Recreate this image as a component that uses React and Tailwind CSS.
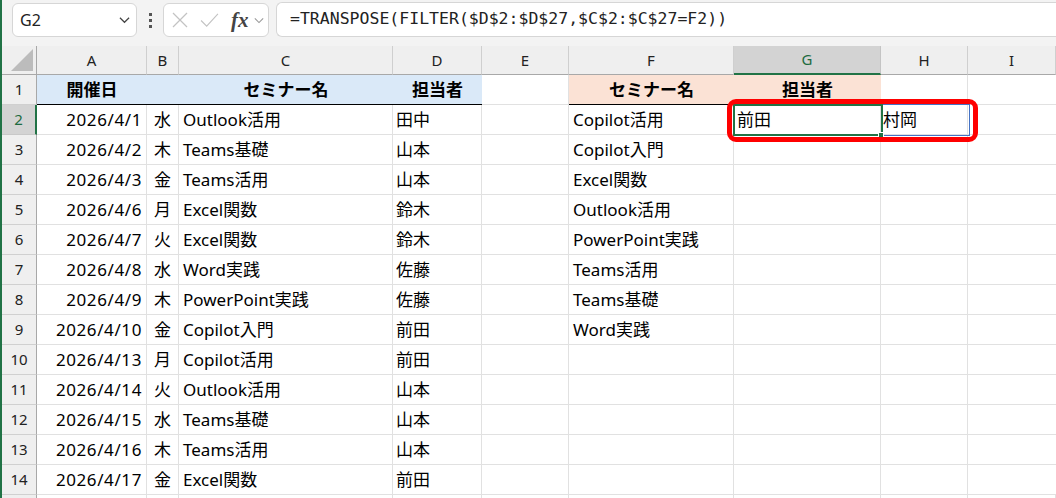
import React from 'react';

// column widths after the 35px row-number gutter
const COLS = [
  { key: 'A', w: 110 },
  { key: 'B', w: 32 },
  { key: 'C', w: 214 },
  { key: 'D', w: 89 },
  { key: 'E', w: 87 },
  { key: 'F', w: 165 },
  { key: 'G', w: 147 },
  { key: 'H', w: 87 },
  { key: 'I', w: 88 },
];

const SEMINARS = [
  ['2026/4/1', '水', 'Outlook活用', '田中'],
  ['2026/4/2', '木', 'Teams基礎', '山本'],
  ['2026/4/3', '金', 'Teams活用', '山本'],
  ['2026/4/6', '月', 'Excel関数', '鈴木'],
  ['2026/4/7', '火', 'Excel関数', '鈴木'],
  ['2026/4/8', '水', 'Word実践', '佐藤'],
  ['2026/4/9', '木', 'PowerPoint実践', '佐藤'],
  ['2026/4/10', '金', 'Copilot入門', '前田'],
  ['2026/4/13', '月', 'Copilot活用', '前田'],
  ['2026/4/14', '火', 'Outlook活用', '山本'],
  ['2026/4/15', '水', 'Teams基礎', '山本'],
  ['2026/4/16', '木', 'Teams活用', '山本'],
  ['2026/4/17', '金', 'Excel関数', '前田'],
];

const UNIQUE_NAMES = [
  'Copilot活用',
  'Copilot入門',
  'Excel関数',
  'Outlook活用',
  'PowerPoint実践',
  'Teams活用',
  'Teams基礎',
  'Word実践',
];

const SPILL = { G: '前田', H: '村岡' };

function Chevron({ className }) {
  return (
    <svg viewBox="0 0 12 8" className={className} fill="none" stroke="currentColor" strokeWidth="1.3">
      <polyline points="1,1.5 6,6.5 11,1.5" />
    </svg>
  );
}

function Toolbar() {
  return (
    <div className="h-[46px] bg-[#f3f3f3] flex items-start pt-[3px]">
      {/* name box */}
      <div className="ml-[10px] w-[125px] h-[34px] bg-white border border-[#d6d6d6] rounded-[6px] flex items-center justify-between pl-[7px] pr-[6px]">
        <span className="text-[16px] text-[#222] font-['Noto_Sans',sans-serif]">G2</span>
        <Chevron className="w-[11px] h-[8px] text-[#444]" />
      </div>

      {/* grip */}
      <div className="w-[26px] h-[34px] flex flex-col items-center justify-center gap-[3px]">
        <span className="w-[3px] h-[3px] bg-[#555]" />
        <span className="w-[3px] h-[3px] bg-[#555]" />
        <span className="w-[3px] h-[3px] bg-[#555]" />
      </div>

      {/* cancel / enter / insert function */}
      <div className="w-[106px] h-[34px] bg-white border border-[#d6d6d6] rounded-[6px] flex items-center pl-[8px]">
        <svg viewBox="0 0 16 16" className="w-[16px] h-[16px]" stroke="#c3c3c3" strokeWidth="1.2">
          <line x1="1" y1="1" x2="15" y2="15" />
          <line x1="15" y1="1" x2="1" y2="15" />
        </svg>
        <svg viewBox="0 0 20 16" className="ml-[12px] w-[19px] h-[15px]" fill="none" stroke="#c3c3c3" strokeWidth="1.2">
          <polyline points="1,8 7,14 19,1" />
        </svg>
        <span className="ml-[12px] text-[21px] leading-none italic font-bold text-[#444] font-['Liberation_Serif',serif]">fx</span>
        <Chevron className="ml-[5px] w-[10px] h-[7px] text-[#999]" />
      </div>

      {/* formula bar */}
      <div className="ml-[7px] flex-1 h-[35px] -mt-[1px] bg-white border border-r-0 border-[#d6d6d6] rounded-l-[6px] flex items-center pl-[13px]">
        <span className="text-[16.5px] text-[#222] font-['DejaVu_Sans_Mono',monospace]">
          =TRANSPOSE(FILTER($D$2:$D$27,$C$2:$C$27=F2))
        </span>
      </div>
    </div>
  );
}

function ColumnHeaders() {
  return (
    <>
      <div className="h-[29px] bg-[#efefef] border-r border-b border-[#a8a8a8] flex items-end justify-end p-[2px]">
        <svg viewBox="0 0 22 22" className="w-[22px] h-[22px] mr-[1px] mb-[1px]">
          <polygon points="22,0 22,22 0,22" fill="#bcbcbc" />
        </svg>
      </div>
      {COLS.map((c) =>
        c.key === 'G' ? (
          <div
            key={c.key}
            className="h-[29px] bg-[#d3d3d3] border-r border-[#c4c4c4] border-b-2 border-b-[#217346] flex items-center justify-center text-[15px] text-[#1d6b40]"
          >
            {c.key}
          </div>
        ) : (
          <div
            key={c.key}
            className="h-[29px] bg-[#efefef] border-r border-[#cfcfcf] border-b border-b-[#a8a8a8] flex items-center justify-center text-[15px] text-[#222]"
          >
            {c.key}
          </div>
        )
      )}
    </>
  );
}

function RowHeader({ n, active }) {
  if (active) {
    return (
      <div className="h-[30px] bg-[#d3d3d3] border-r-2 border-r-[#217346] border-b border-b-[#c8c8c8] flex items-center justify-center text-[15px] text-[#1d6b40]">
        {n}
      </div>
    );
  }
  return (
    <div className="h-[30px] bg-[#efefef] border-r border-r-[#a8a8a8] border-b border-b-[#d0d0d0] flex items-center justify-center text-[15px] text-[#222]">
      {n}
    </div>
  );
}

function HeaderRow() {
  const blue = 'bg-[#dae9f8] border-b border-b-black';
  const peach = 'bg-[#fbe2d5] border-b border-b-black';
  const title = 'h-[30px] flex items-center justify-center font-bold text-[17px] text-black';
  return (
    <>
      <RowHeader n={1} />
      <div className={`${title} ${blue}`}>開催日</div>
      <div className={`${title} ${blue}`} />
      <div className={`${title} ${blue}`}>セミナー名</div>
      <div className={`${title} ${blue}`}>担当者</div>
      <div className="h-[30px] border-r border-b border-[#e1e1e1]" />
      <div className={`${title} ${peach}`}>セミナー名</div>
      <div className={`${title} ${peach}`}>担当者</div>
      <div className="h-[30px] border-r border-b border-[#e1e1e1]" />
      <div className="h-[30px] border-b border-[#e1e1e1]" />
    </>
  );
}

function DataRow({ idx, row }) {
  const [date, day, name, owner] = row;
  const cell = 'h-[30px] border-r border-b border-[#e1e1e1] flex items-center text-[17px] text-black whitespace-nowrap overflow-hidden';
  const n = idx + 2;
  return (
    <>
      <RowHeader n={n} active={n === 2} />
      <div className={`${cell} justify-end pr-[4px] tracking-[0.6px]`}>{date}</div>
      <div className={`${cell} justify-center`}>{day}</div>
      <div className={`${cell} pl-[4px]`}>{name}</div>
      <div className={`${cell} pl-[3px]`}>{owner}</div>
      <div className={cell} />
      <div className={`${cell} pl-[4px]`}>{UNIQUE_NAMES[idx] ?? ''}</div>
      <div className={`${cell} pl-[3px]`}>{n === 2 ? SPILL.G : ''}</div>
      <div className={`${cell} pl-[2px]`}>{n === 2 ? SPILL.H : ''}</div>
      <div className={`${cell} border-r-0`} />
    </>
  );
}

export default function App() {
  return (
    <div className="relative w-[1056px] h-[498px] overflow-hidden bg-white border-l-2 border-[#217346] font-['Noto_Sans','Noto_Sans_CJK_JP',sans-serif]">
      <Toolbar />
      <div className="grid grid-cols-[35px_110px_32px_214px_89px_87px_165px_147px_87px_1fr]">
        <ColumnHeaders />
        <HeaderRow />
        {SEMINARS.map((row, i) => (
          <DataRow key={i} idx={i} row={row} />
        ))}
        {/* top edge of the next row */}
        <div className="h-[30px] bg-[#efefef] border-r border-r-[#a8a8a8]" />
        {COLS.map((c) => (
          <div key={c.key} className="h-[30px] border-r border-[#e1e1e1]" />
        ))}
      </div>

      {/* spill range outline G2:H2 */}
      <div className="absolute left-[731px] top-[104px] w-[237px] h-[32px] border border-[#4472c4]" />
      {/* active cell G2 */}
      <div className="absolute left-[731px] top-[104px] w-[150px] h-[32px] border-2 border-[#217346]" />
      <div className="absolute left-[876px] top-[132px] w-[6px] h-[6px] bg-[#217346] border border-white" />
      {/* callout around the spilled names */}
      <div className="absolute left-[725px] top-[99px] w-[251px] h-[43px] border-[5px] border-[#ff0000] rounded-[9px]" />
    </div>
  );
}
